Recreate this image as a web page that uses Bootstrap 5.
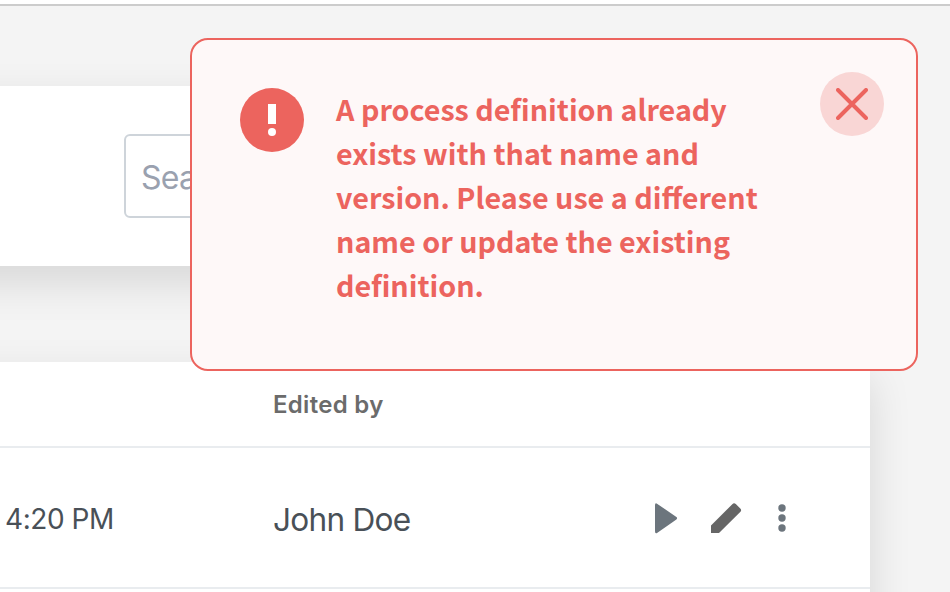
<!DOCTYPE html>
<html lang="en">
<head>
<meta charset="utf-8">
<meta name="viewport" content="width=device-width, initial-scale=1">
<title>Process definitions</title>
<link href="https://cdn.jsdelivr.net/npm/bootstrap@5.3.0/dist/css/bootstrap.min.css" rel="stylesheet">
<style>
body{background:#f4f4f4;font-family:Inter,"Liberation Sans",sans-serif;height:592px;color:#495057}
.topline{height:6px;border-bottom:2px solid #ccc}
.page{width:870px;padding-top:80px}
.panel{box-shadow:0 16px 40px rgba(0,0,0,.12);margin-left:-80px;padding-left:80px}
.filters{height:180px;padding:48px 48px 48px 204px;margin-bottom:96px}
.search{height:84px;border:2px solid #ced4da;border-radius:6px;padding:2px 16px 0 15px;font-size:32px;letter-spacing:-.7px;color:#495057}
.search::placeholder{color:#9aa1af}
.listing{height:270px}
.list-head,.list-item{border-bottom:2px solid #e9ecef}
.list-head{height:86px;padding-top:2px;font-size:24px;font-weight:600;color:#6b6b6b;letter-spacing:.3px}
.list-item{height:141px}
.col-time{width:273px;padding:2px 0 0 5px;font-size:28px;letter-spacing:-.45px}
.col-name{padding-top:4px;font-size:31.6px;letter-spacing:-.75px}
.actions{margin-right:80px;gap:32px}
.toast-box{left:190px;top:38px;width:728px;height:333px;border:2px solid #ec645e;border-radius:18px;background:#fef8f8;padding:32px 32px 0 48px;color:#ec645e}
.toast-icon{margin-top:16px;margin-right:32px}
.toast-text{width:440px;margin-top:15px;font:700 28.7px/44.1px "Noto Sans CJK SC",sans-serif}
.dismiss{width:64px;height:64px;background:#f9d6d5}
</style>
</head>
<body class="overflow-hidden position-relative">
<div class="topline bg-white"></div>
<main class="page">
  <section class="panel filters bg-white">
    <input class="search form-control" type="text" placeholder="Search" aria-label="Search">
  </section>
  <section class="panel listing bg-white">
    <div class="list-head d-flex align-items-center"><div class="col-time"></div><div>Edited by</div></div>
    <div class="list-item d-flex align-items-center">
      <div class="col-time">4:20 PM</div>
      <div class="col-name flex-grow-1">John Doe</div>
      <div class="actions d-flex align-items-center">
        <svg width="24" height="32" viewBox="0 0 24 32" fill="#6c757d"><path d="M1 3.2Q1 .3 3.4 1.9L22.4 15Q23.8 16.2 22.4 17.4L3.4 30.7Q1 32.4 1 29.3Z"/></svg>
        <svg width="32" height="32" viewBox="0 0 32 32" fill="#666"><path d="M1 31V23.5L22.3 2.2Q24 .3 25.8 2L30.3 6.6Q32 8.3 30.2 10L9 31Z"/></svg>
        <svg width="16" height="32" viewBox="0 0 16 32" fill="#6c757d"><circle cx="8" cy="6" r="3.7"/><circle cx="8" cy="16" r="3.7"/><circle cx="8" cy="26" r="3.7"/></svg>
      </div>
    </div>
  </section>
</main>
<div class="toast-box position-absolute d-flex align-items-start" role="alert">
  <svg class="toast-icon flex-shrink-0" width="64" height="64" viewBox="0 0 64 64"><circle cx="32" cy="32" r="32" fill="#ec645e"/><path d="M28 16h8v20h-8z" fill="#fff"/><circle cx="32" cy="44" r="4" fill="#fff"/></svg>
  <div class="toast-text">A process definition already exists with that name and version. Please use a different name or update the existing definition.</div>
  <button class="dismiss btn p-0 border-0 rounded-circle ms-auto d-flex align-items-center justify-content-center flex-shrink-0" aria-label="Close">
    <svg width="32" height="32" viewBox="0 0 32 32" fill="none" stroke="#ec645e" stroke-width="4" stroke-linecap="round"><path d="M2 2 30 30M30 2 2 30"/></svg>
  </button>
</div>
<script src="https://cdn.jsdelivr.net/npm/bootstrap@5.3.0/dist/js/bootstrap.bundle.min.js"></script>
</body>
</html>
